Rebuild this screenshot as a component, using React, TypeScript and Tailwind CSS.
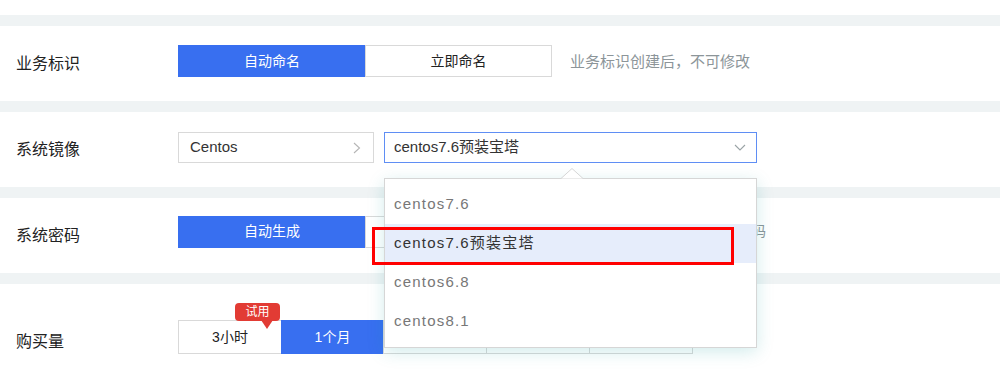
import React from 'react';

const font = { fontFamily: '"Liberation Sans", "Noto Sans CJK SC", sans-serif' };

const Band = () => <div className="h-[11px] bg-[#eff3f4]" />;

const Label: React.FC<{ text: string }> = ({ text }) => (
  <div className="w-[178px] pl-4 text-[16px] text-[#222]">{text}</div>
);

const SegButton: React.FC<{ text?: string; active?: boolean; w: string; h: string }> = ({ text, active, w, h }) => (
  <div
    className={`${w} ${h} flex items-center justify-center text-[14px] -ml-px first:ml-0 ${
      active ? 'bg-[#386ff0] text-white border border-[#386ff0]' : 'bg-white text-[#222] border border-[#d9d9d9]'
    }`}
  >
    {text}
  </div>
);

const options = ['centos7.6', 'centos7.6预装宝塔', 'centos6.8', 'centos8.1'];

const ImageDropdown = () => (
  <div className="absolute left-0 top-[46px] w-[373px] z-10">
    {/* arrow */}
    <svg className="absolute left-[177px] top-[-10px]" width="22" height="11" viewBox="0 0 22 11">
      <path d="M0 10.5 L11 0.5 L22 10.5" fill="#fff" stroke="#d6d6d6" strokeWidth="1" />
    </svg>
    <div className="border border-[#d6d6d6] bg-white pt-[6px] pb-[6px] shadow-[0_4px_16px_rgba(0,150,150,0.18)]">
      {options.map((o, i) => (
        <div
          key={o}
          className={`h-[39px] flex items-center pl-[9px] text-[15px] tracking-[1.2px] ${
            i === 1 ? 'bg-[#e6edfb] text-[#333]' : 'text-[#777]'
          }`}
        >
          {o}
        </div>
      ))}
    </div>
    <div className="absolute left-[-12px] top-[49px] w-[362px] h-[38px] border-[3px] border-[#ff0000]" />
  </div>
);

export default function App() {
  return (
    <div className="w-[1000px] h-[372px] bg-white overflow-hidden" style={font}>
      <div className="h-[15px]" />
      <Band />

      {/* 业务标识 */}
      <div className="h-[75px] flex items-center">
        <Label text="业务标识" />
        <div className="flex -mt-[5px]">
          <SegButton text="自动命名" active w="w-[188px]" h="h-[32px]" />
          <SegButton text="立即命名" w="w-[187px]" h="h-[32px]" />
        </div>
        <span className="ml-[18px] text-[15px] text-[#8c9599] -mt-[3px]">业务标识创建后，不可修改</span>
      </div>
      <Band />

      {/* 系统镜像 */}
      <div className="h-[75px] flex items-center">
        <Label text="系统镜像" />
        <div className="flex gap-[10px] -mt-[4px]">
          <div className="w-[196px] h-[31px] border border-[#d9d9d9] flex items-center justify-between pl-[11px] pr-[12px] text-[15px] text-[#333]">
            <span>Centos</span>
            <svg width="8" height="12" viewBox="0 0 8 12">
              <path d="M1 1 L6.5 6 L1 11" fill="none" stroke="#b5b5b5" strokeWidth="1.1" />
            </svg>
          </div>
          <div className="relative">
            <div className="w-[373px] h-[31px] border border-[#5f8ef4] flex items-center justify-between pl-[9px] pr-[10px] text-[15px] text-[#333]">
              <span>centos7.6预装宝塔</span>
              <svg width="12" height="7" viewBox="0 0 12 7">
                <path d="M1 1 L6 6 L11 1" fill="none" stroke="#9aa3a6" strokeWidth="1.1" />
              </svg>
            </div>
            <ImageDropdown />
          </div>
        </div>
      </div>
      <Band />

      {/* 系统密码 */}
      <div className="h-[75px] flex items-center">
        <Label text="系统密码" />
        <div className="flex -mt-[8px]">
          <SegButton text="自动生成" active w="w-[188px]" h="h-[32px]" />
          <SegButton text="自定义密码" w="w-[187px]" h="h-[32px]" />
        </div>
        <span className="ml-[18px] text-[14px] text-[#8c9599] -mt-[8px]">请在创建后登录控制台查看密码</span>
      </div>
      <Band />

      {/* 购买量 */}
      <div className="flex items-end pt-[36px]">
        <Label text="购买量" />
        <div className="relative flex">
          <SegButton text="3小时" w="w-[104px]" h="h-[34px]" />
          <SegButton text="1个月" active w="w-[103px]" h="h-[34px]" />
          <SegButton text="3个月" w="w-[104px]" h="h-[34px]" />
          <SegButton text="6个月" w="w-[104px]" h="h-[34px]" />
          <SegButton text="1年" w="w-[104px]" h="h-[34px]" />
          <div className="absolute left-[57px] top-[-17px] w-[45px] h-[18px] rounded-[4px] bg-[#e23b34] text-white text-[12px] flex items-center justify-center">
            试用
            <svg className="absolute left-[26px] top-[17px]" width="12" height="10" viewBox="0 0 12 10">
              <path d="M0 0 L12 0 L6 9 Z" fill="#e23b34" />
            </svg>
          </div>
        </div>
      </div>
    </div>
  );
}
